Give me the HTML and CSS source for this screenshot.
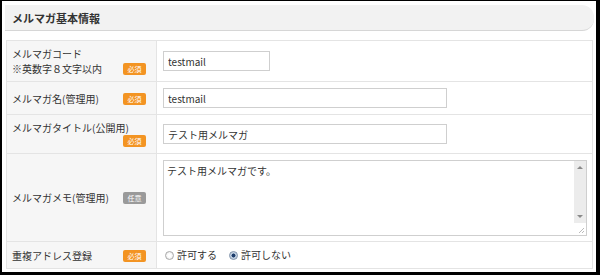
FILE: index.html
```html
<!DOCTYPE html>
<html lang="ja">
<head>
<meta charset="utf-8">
<title>メルマガ基本情報</title>
<link rel="stylesheet" href="styles.css">
</head>
<body>
<div class="frame">
  <div class="panel-head"><h2 class="panel-title">メルマガ基本情報</h2></div>
  <div class="form-table">
    <div class="row row-code">
      <div class="label-cell"><span class="label-text">メルマガコード<br>※英数字８文字以内</span><span class="badge badge-req">必須</span></div>
      <div class="field-cell"><input class="text-input input-short" type="text" value="testmail"></div>
    </div>
    <div class="row row-name">
      <div class="label-cell"><span class="label-text">メルマガ名(管理用)</span><span class="badge badge-req">必須</span></div>
      <div class="field-cell"><input class="text-input input-long" type="text" value="testmail"></div>
    </div>
    <div class="row row-title">
      <div class="label-cell"><span class="label-text">メルマガタイトル(公開用)</span><span class="badge badge-req">必須</span></div>
      <div class="field-cell"><input class="text-input input-long" type="text" value="テスト用メルマガ"></div>
    </div>
    <div class="row row-memo">
      <div class="label-cell"><span class="label-text">メルマガメモ(管理用)</span><span class="badge badge-opt">任意</span></div>
      <div class="field-cell field-top">
        <div class="memo-box">
          <textarea class="memo-text">テスト用メルマガです。</textarea>
          <div class="scroll-col">
            <div class="scroll-track"><span class="arrow arrow-up"></span><span class="arrow arrow-down"></span></div>
            <div class="scroll-corner"><span class="grip"></span></div>
          </div>
        </div>
      </div>
    </div>
    <div class="row row-dup">
      <div class="label-cell"><span class="label-text">重複アドレス登録</span><span class="badge badge-req">必須</span></div>
      <div class="field-cell">
        <label class="radio-item"><span class="radio"></span>許可する</label>
        <label class="radio-item"><span class="radio radio-on"></span>許可しない</label>
      </div>
    </div>
  </div>
</div>
</body>
</html>
```

FILE: styles.css
```css
* { box-sizing: border-box; }
html, body { margin: 0; padding: 0; background: #fff; }
body {
  font-family: "Noto Sans CJK JP", "Liberation Sans", sans-serif;
  font-size: 10px;
  color: #333;
}
.frame {
  width: 600px;
  height: 275px;
  border-style: solid;
  border-color: #000;
  border-width: 1px 4px 3px 2px;
  padding: 4px 0 0 3px;
  overflow: hidden;
}
.panel-head {
  width: 589px;
  height: 26px;
  background: #f2f2f2;
  border-radius: 0 12px 12px 0;
  border-bottom: 1px solid #d6d6d6;
  display: flex;
  align-items: center;
  padding-left: 7px;
}
.panel-title {
  margin: 0;
  font-size: 11px;
  font-weight: bold;
  color: #333;
}
.form-table {
  margin: 9px 0 0 1px;
  width: 587px;
  border: 1px solid #e4e4e4;
  border-bottom: none;
}
.row {
  display: grid;
  grid-template-columns: 150px 1fr;
  border-bottom: 1px solid #e4e4e4;
}
.row-code { height: 41px; }
.row-name { height: 33px; }
.row-title { height: 39px; }
.row-memo { height: 88px; }
.row-dup { height: 27px; }
.label-cell {
  background: #f6f6f6;
  border-right: 1px solid #e4e4e4;
  display: flex;
  flex-wrap: wrap;
  align-content: center;
  align-items: flex-end;
  justify-content: space-between;
  padding: 0 10px 0 5px;
  line-height: 15px;
}
.badge {
  display: inline-block;
  width: 23px;
  height: 12px;
  line-height: 12px;
  border-radius: 2px;
  color: #fff;
  font-size: 7px;
  text-align: center;
  margin-left: auto;
  margin-bottom: 1px;
}
.badge-req { background: #f39423; }
.badge-opt { background: #9a9a9a; }
.field-cell {
  display: flex;
  align-items: center;
  padding-left: 6px;
}
.field-top { align-items: flex-start; padding-top: 6px; }
.text-input {
  height: 20px;
  border: 1px solid #cfcfcf;
  padding: 0 4px;
  font-family: "Noto Sans CJK JP", "Liberation Sans", sans-serif;
  font-size: 10px;
  color: #333;
  background: #fff;
  outline: none;
}
.input-short { width: 107px; }
.input-long { width: 284px; }
.memo-box {
  width: 424px;
  height: 76px;
  border: 1px solid #cfcfcf;
  display: flex;
}
.memo-text {
  flex: 1;
  border: none;
  resize: none;
  outline: none;
  padding: 3px 3px;
  font-family: "Noto Sans CJK JP", "Liberation Sans", sans-serif;
  font-size: 10px;
  line-height: 14px;
  color: #333;
  overflow: hidden;
}
.scroll-col {
  width: 12px;
  display: flex;
  flex-direction: column;
}
.scroll-track {
  flex: 1;
  background: #ececec;
  display: flex;
  flex-direction: column;
  justify-content: space-between;
  align-items: center;
  padding: 5px 0 5px;
}
.arrow {
  width: 0;
  height: 0;
  border-left: 3px solid transparent;
  border-right: 3px solid transparent;
}
.arrow-up { border-bottom: 3px solid #8a8a8a; }
.arrow-down { border-top: 3px solid #8a8a8a; }
.scroll-corner {
  height: 12px;
  background: #fff;
  display: flex;
  align-items: flex-end;
  justify-content: flex-end;
  padding: 0 2px 2px 0;
}
.grip {
  width: 5px;
  height: 5px;
  background: linear-gradient(135deg, transparent 45%, #bbb 45%, #bbb 55%, transparent 55%, transparent 70%, #bbb 70%, #bbb 80%, transparent 80%);
}
.radio-item {
  display: flex;
  align-items: center;
  margin-right: 10px;
  line-height: 14px;
}
.radio {
  width: 9px;
  height: 9px;
  border-radius: 50%;
  border: 1px solid #a9a9a9;
  background: radial-gradient(circle at 50% 50%, #fff 0, #fff 30%, #e2e2e2 100%);
  margin: 0 3px 0 2px;
}
.radio-on {
  border-color: #7d90a8;
  background: radial-gradient(circle at 50% 50%, #1e3d6b 0, #1e3d6b 35%, #b5c6da 45%, #e6edf5 100%);
}
```
